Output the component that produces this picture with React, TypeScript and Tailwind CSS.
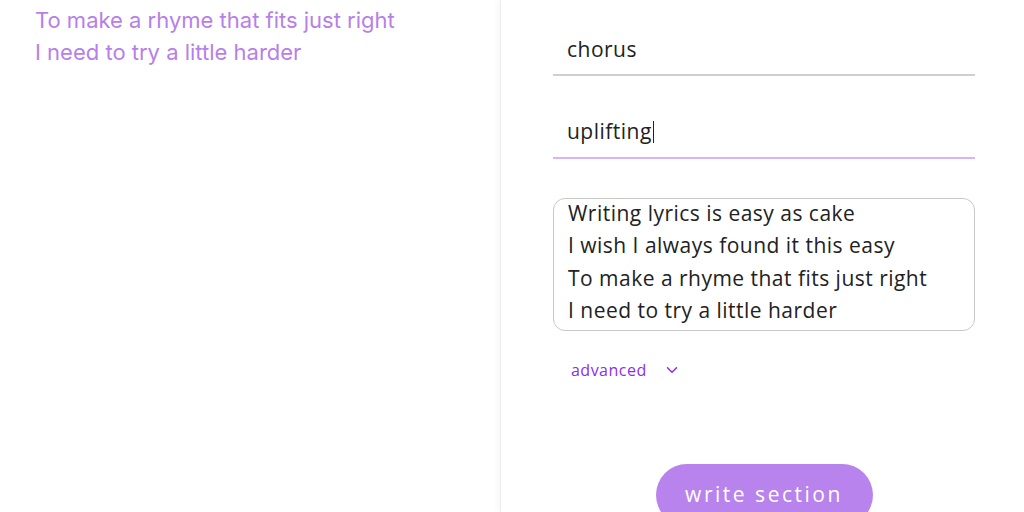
import { ChevronDown } from "lucide-react"

const lyrics = [
    "Writing lyrics is easy as cake",
    "I wish I always found it this easy",
    "To make a rhyme that fits just right",
    "I need to try a little harder",
]

export default function App() {
    return (
        <div className="w-[1024px] h-[512px] overflow-hidden bg-white flex flex-row">
            {/* OUTPUT */}
            <div className="w-[500px] shrink-0 pl-[35px] pt-[4px] font-['Inter',sans-serif] text-[22px] leading-[32px] text-[#b77fea]">
                <p>To make a rhyme that fits just right</p>
                <p>I need to try a little harder</p>
            </div>

            {/* FORM */}
            <div className="flex-1 border-l border-[#ececec] shadow-[-3px_0_6px_rgba(0,0,0,0.03)] pl-[52px] pt-[25px] font-['Open_Sans',sans-serif] text-[#222] tracking-[0.03em]">
                <div className="w-[422px] flex flex-col">
                    <div className="h-[51px] flex items-center px-[14px] border-b-2 border-[#cfcfcf] text-[21px]">
                        chorus
                    </div>
                    <div className="mt-[31px] h-[52px] flex items-center px-[14px] border-b-2 border-[#d6b4f5] text-[21px]">
                        uplifting
                        <span className="inline-block w-[1px] h-[22px] bg-[#222] ml-[1px]" />
                    </div>
                    <div className="mt-[39px] h-[133px] rounded-[12px] border border-[#c9c9c9] px-[14px] text-[21px] leading-[32.3px]">
                        <div className="-mt-[2px]">
                            {lyrics.map((line) => (
                                <p key={line}>{line}</p>
                            ))}
                        </div>
                    </div>
                    <button className="mt-[27px] ml-[18px] self-start flex items-center gap-[16px] text-[16px] text-[#8b2ef0]">
                        advanced
                        <ChevronDown className="h-[18px] w-[18px]" strokeWidth={2} />
                    </button>
                    <div className="mt-[82px] flex justify-center">
                        <button className="w-[217px] h-[62px] rounded-full bg-[#b983ee] text-white text-[21px] leading-[32px] tracking-[0.12em] pt-[14px] self-start flex justify-center">
                            write section
                        </button>
                    </div>
                </div>
            </div>
        </div>
    )
}
